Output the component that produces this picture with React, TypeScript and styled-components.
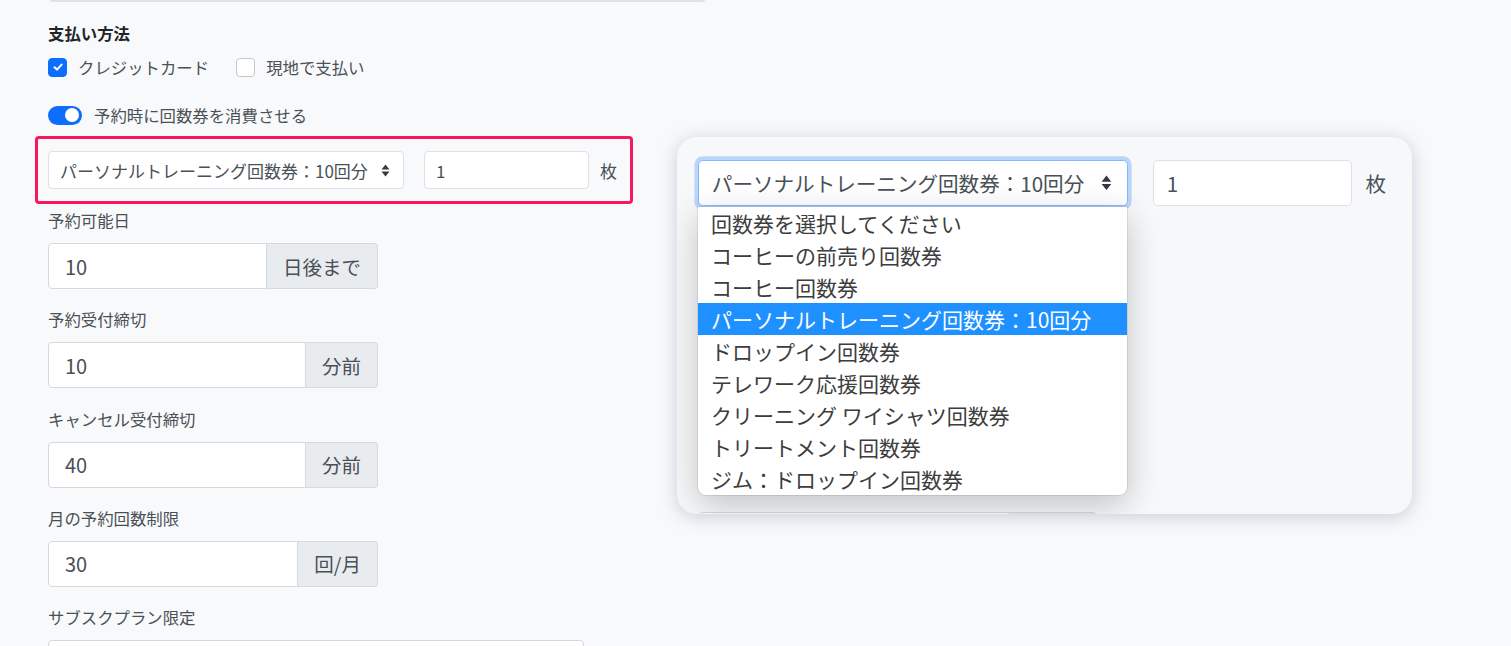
import React from 'react';
import styled, { createGlobalStyle } from 'styled-components';

const GlobalStyle = createGlobalStyle`
  body {
    margin: 0;
    background: #f8f9fa;
    font-family: "Noto Sans CJK JP", "Noto Sans", sans-serif;
    color: #495057;
    overflow: hidden;
  }
`;

const Page = styled.div`
  display: flex;
  align-items: flex-start;
  gap: 44px;
`;

const LeftColumn = styled.div`
  width: 585px;
  padding-left: 48px;
  flex-shrink: 0;
`;

const RightColumn = styled.div`
  padding-top: 137px;
`;

const TopRule = styled.div`
  width: 655px;
  margin-left: 2px;
  height: 2px;
  background: #dfe2e7;
  border-radius: 0 0 3px 3px;
`;

const SectionTitle = styled.div`
  margin-top: 19px;
  font-size: 16.4px;
  line-height: 24px;
  font-weight: 700;
  color: #212529;
`;

const CheckRow = styled.div`
  display: flex;
  align-items: center;
  height: 24px;
  margin-top: 10px;
`;

const CheckItem = styled.label`
  display: flex;
  align-items: center;
  gap: 11px;
  font-size: 16.4px;
  margin-right: 27px;
`;

const CheckBox = styled.span<{ $checked?: boolean }>`
  width: 19px;
  height: 19px;
  box-sizing: border-box;
  border-radius: 4px;
  display: flex;
  align-items: center;
  justify-content: center;
  background: ${(p) => (p.$checked ? '#0d6efd' : '#fff')};
  border: 1px solid ${(p) => (p.$checked ? '#0d6efd' : '#c4c8cd')};
`;

const ToggleRow = styled.div`
  display: flex;
  align-items: center;
  gap: 12px;
  height: 24px;
  margin-top: 24px;
  font-size: 16.4px;
`;

const Toggle = styled.span`
  width: 34px;
  height: 19px;
  border-radius: 10px;
  background: #0d6efd;
  display: flex;
  align-items: center;
  justify-content: flex-end;
  padding: 0 3px;
  box-sizing: border-box;

  &::after {
    content: '';
    width: 14px;
    height: 14px;
    border-radius: 50%;
    background: #fff;
  }
`;

const Highlight = styled.div`
  margin: 9px 0 5px -13px;
  width: 598px;
  box-sizing: border-box;
  border: 3px solid #f7185f;
  border-radius: 4px;
  padding: 12px 10px;
`;

const TicketRow = styled.div<{ $spaced?: boolean }>`
  display: flex;
  align-items: center;
  margin-bottom: ${(p) => (p.$spaced ? '20px' : '0')};
`;

const SelectBox = styled.div<{ $focused?: boolean; $width: number }>`
  width: ${(p) => p.$width}px;
  height: 38px;
  box-sizing: border-box;
  display: flex;
  align-items: center;
  padding: 0 13px 0 11px;
  background: #fff;
  border: 1px solid ${(p) => (p.$focused ? '#86b7fe' : '#dde0e4')};
  border-radius: 4px;
  font-size: 17px;
  color: #495057;
  white-space: nowrap;
  box-shadow: ${(p) => (p.$focused ? '0 0 0 3px rgba(13,110,253,0.25)' : 'none')};
`;

const SelectText = styled.span`
  flex: 1;
`;

const CountInput = styled.div`
  width: 165px;
  height: 38px;
  box-sizing: border-box;
  margin-left: 20px;
  padding-left: 11px;
  display: flex;
  align-items: center;
  background: #fff;
  border: 1px solid #dde0e4;
  border-radius: 4px;
  font-size: 17px;
`;

const Unit = styled.span`
  margin-left: 11px;
  font-size: 17px;
  color: #495057;
`;

const Field = styled.div`
  margin-bottom: 19.3px;
`;

const FieldLabel = styled.div`
  font-size: 16.4px;
  line-height: 22px;
  margin-bottom: 12px;
  color: #495057;
`;

const InputGroup = styled.div<{ $width?: number }>`
  display: flex;
  width: ${(p) => p.$width ?? 330}px;
  height: 46px;
`;

const GroupInput = styled.div<{ $alone?: boolean }>`
  flex: 1;
  display: flex;
  align-items: center;
  padding: 0 16px;
  background: #fff;
  border: 1px solid #d5d9de;
  border-radius: ${(p) => (p.$alone ? '4px' : '4px 0 0 4px')};
  font-size: 20px;
  color: #495057;
`;

const Addon = styled.div`
  display: flex;
  align-items: center;
  padding: 0 16px;
  background: #e9ecef;
  border: 1px solid #d5d9de;
  border-left: none;
  border-radius: 0 4px 4px 0;
  font-size: 19.5px;
  color: #495057;
`;

const Card = styled.div`
  position: relative;
  width: 735px;
  height: 377px;
  border-radius: 20px;
  background: #f7f8fa;
  box-shadow: 0 3px 18px rgba(110, 130, 160, 0.35);
  overflow: hidden;
`;

const Zoomed = styled.div`
  zoom: 1.21;
  padding: 19px 0 0 17px;
`;

const Dropdown = styled.ul`
  position: absolute;
  left: 21px;
  top: 70px;
  width: 429px;
  margin: 0;
  padding: 0;
  list-style: none;
  background: #fff;
  border-radius: 0 0 8px 8px;
  box-shadow: 0 10px 34px rgba(0, 0, 0, 0.22), 0 0 0 1px rgba(0, 0, 0, 0.08);
`;

const Option = styled.li<{ $selected?: boolean }>`
  height: 32px;
  line-height: 32px;
  padding-left: 13px;
  font-size: 21px;
  white-space: nowrap;
  color: ${(p) => (p.$selected ? '#fff' : '#3d3d3d')};
  background: ${(p) => (p.$selected ? '#1e90ff' : 'transparent')};
`;

const Arrows = () => (
  <svg width="9" height="13" viewBox="0 0 9 13">
    <path d="M0.5 5.5 L4.5 0.5 L8.5 5.5 Z M0.5 7.5 L4.5 12.5 L8.5 7.5 Z" fill="#343a40" />
  </svg>
);

const Check = () => (
  <svg width="12" height="12" viewBox="0 0 12 12">
    <polyline points="2.5 6.3 5 8.6 9.6 3.6" fill="none" stroke="#fff" strokeWidth="2" strokeLinecap="round" strokeLinejoin="round" />
  </svg>
);

const selected = 'パーソナルトレーニング回数券：10回分';

const options = [
  '回数券を選択してください',
  'コーヒーの前売り回数券',
  'コーヒー回数券',
  selected,
  'ドロップイン回数券',
  'テレワーク応援回数券',
  'クリーニング ワイシャツ回数券',
  'トリートメント回数券',
  'ジム：ドロップイン回数券',
];

const fields = [
  { label: '予約可能日', value: '10', unit: '日後まで' },
  { label: '予約受付締切', value: '10', unit: '分前' },
  { label: 'キャンセル受付締切', value: '40', unit: '分前' },
  { label: '月の予約回数制限', value: '30', unit: '回/月' },
];

const TicketSelect = ({ focused, spaced }: { focused?: boolean; spaced?: boolean }) => (
  <TicketRow $spaced={spaced}>
    <SelectBox $width={356} $focused={focused}>
      <SelectText>{selected}</SelectText>
      <Arrows />
    </SelectBox>
    <CountInput>1</CountInput>
    <Unit>枚</Unit>
  </TicketRow>
);

const Fields = () => (
  <>
    {fields.map((f) => (
      <Field key={f.label}>
        <FieldLabel>{f.label}</FieldLabel>
        <InputGroup>
          <GroupInput>{f.value}</GroupInput>
          <Addon>{f.unit}</Addon>
        </InputGroup>
      </Field>
    ))}
  </>
);

const App = () => {
  return (
    <>
      <GlobalStyle />
      <Page>
        <LeftColumn>
          <TopRule />
          <SectionTitle>支払い方法</SectionTitle>
          <CheckRow>
            <CheckItem>
              <CheckBox $checked>
                <Check />
              </CheckBox>
              クレジットカード
            </CheckItem>
            <CheckItem>
              <CheckBox />
              現地で支払い
            </CheckItem>
          </CheckRow>
          <ToggleRow>
            <Toggle />
            予約時に回数券を消費させる
          </ToggleRow>
          <Highlight>
            <TicketSelect />
          </Highlight>
          <Fields />
          <Field>
            <FieldLabel>サブスクプラン限定</FieldLabel>
            <InputGroup $width={536}>
              <GroupInput $alone />
            </InputGroup>
          </Field>
        </LeftColumn>
        <RightColumn>
          <Card>
            <Zoomed>
              <TicketSelect focused spaced />
              <Fields />
            </Zoomed>
            <Dropdown>
              {options.map((o) => (
                <Option key={o} $selected={o === selected}>
                  {o}
                </Option>
              ))}
            </Dropdown>
          </Card>
        </RightColumn>
      </Page>
    </>
  );
};

export default App;
